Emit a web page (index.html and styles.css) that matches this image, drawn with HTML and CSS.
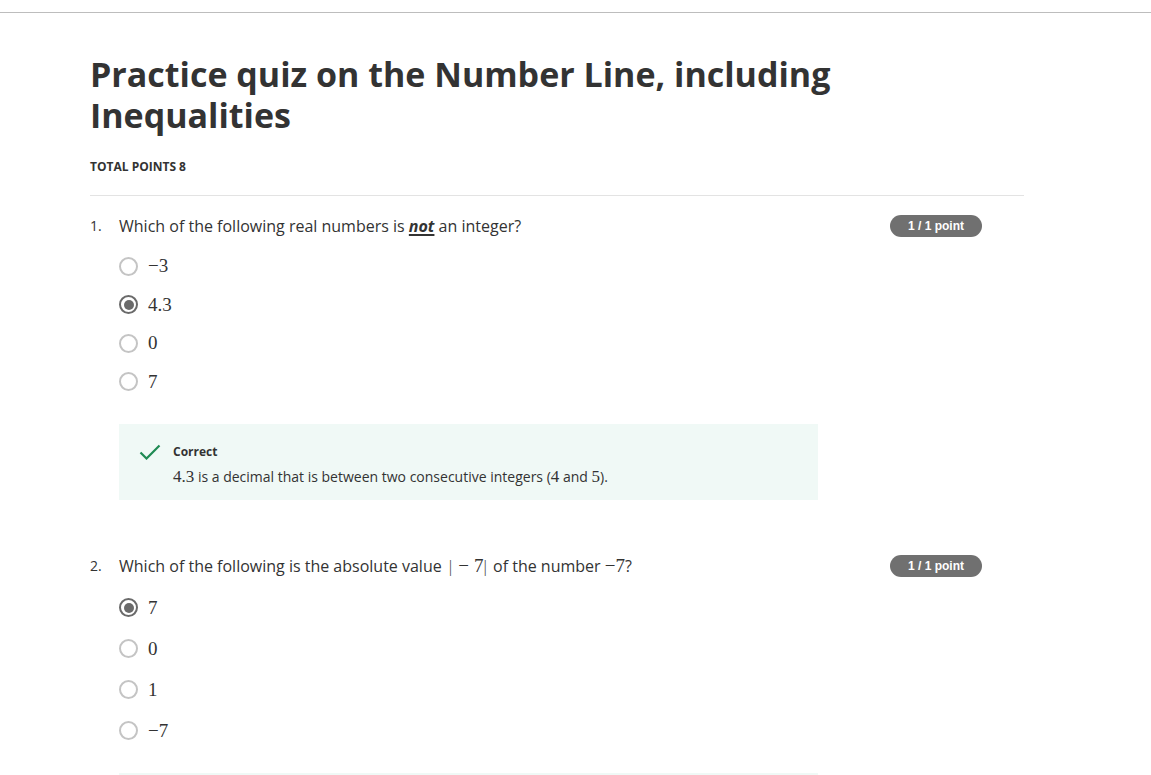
FILE: index.html
```html
<!DOCTYPE html>
<html>
<head>
<meta charset="utf-8">
<link rel="stylesheet" href="styles.css">
</head>
<body>
<div class="topbar"></div>
<main class="page">
  <h1 class="title">Practice quiz on the Number Line, including Inequalities</h1>
  <div class="total">TOTAL POINTS 8</div>
  <div class="sep"></div>

  <section class="question">
    <div class="qnum">1.</div>
    <div class="qbody">
      <div class="qtext">Which of the following real numbers is <u><b><i>not</i></b></u> an integer?</div>
      <div class="options q1">
        <div class="opt"><span class="radio"></span><span class="math">−3</span></div>
        <div class="opt"><span class="radio checked"></span><span class="math">4.3</span></div>
        <div class="opt"><span class="radio"></span><span class="math">0</span></div>
        <div class="opt"><span class="radio"></span><span class="math">7</span></div>
      </div>
      <div class="feedback">
        <svg class="check" width="22" height="16" viewBox="0 0 22 16"><path d="M1.5 8.5 L7.5 14.5 L20.5 1.5" fill="none" stroke="#1f8a53" stroke-width="2.2"/></svg>
        <div class="fb-text">
          <div class="fb-title">Correct</div>
          <div class="fb-expl"><span class="math">4.3</span> is a decimal that is between two consecutive integers (<span class="math">4</span> and <span class="math">5</span>).</div>
        </div>
      </div>
    </div>
    <div class="badge">1 / 1 point</div>
  </section>

  <section class="question q2">
    <div class="qnum">2.</div>
    <div class="qbody">
      <div class="qtext">Which of the following is the absolute value <span class="math abs"><span class="bar">|</span><span class="bin">−</span>7<span class="bar">|</span></span> of the number <span class="math">−7</span>?</div>
      <div class="options q2opts">
        <div class="opt"><span class="radio checked"></span><span class="math">7</span></div>
        <div class="opt"><span class="radio"></span><span class="math">0</span></div>
        <div class="opt"><span class="radio"></span><span class="math">1</span></div>
        <div class="opt"><span class="radio"></span><span class="math">−7</span></div>
      </div>
      <div class="feedback partial"></div>
    </div>
    <div class="badge">1 / 1 point</div>
  </section>
</main>
</body>
</html>
```

FILE: styles.css
```css
html, body {
  margin: 0;
  padding: 0;
  background: #fff;
  overflow: hidden;
  height: 775px;
}
body {
  font-family: "Open Sans", "Liberation Sans", sans-serif;
  color: #333;
}
.topbar {
  height: 12px;
  border-bottom: 1px solid #bdbdbd;
}
.page {
  width: 934px;
  margin-left: 90px;
}
.title {
  margin: 0;
  padding-top: 41px;
  font-size: 34px;
  line-height: 41px;
  font-weight: 700;
  color: #333;
  width: 760px;
}
.total {
  margin-top: 23px;
  font-size: 12px;
  font-weight: 700;
  line-height: 16px;
  color: #333;
}
.sep {
  margin-top: 20px;
  height: 1px;
  background: #e3e3e3;
}
.question {
  display: grid;
  grid-template-columns: 29px 771px 92px;
  margin-top: 19px;
}
.question.q2 {
  margin-top: 55px;
}
.qnum {
  font-size: 14px;
  line-height: 22px;
}
.qtext {
  font-size: 16px;
  line-height: 22px;
}
.qtext u {
  text-underline-offset: 2px;
  text-decoration-thickness: 2px;
}
.qtext .math {
  font-size: 19px;
  line-height: 16px;
}
.abs {
  margin: 0 2px 0 3px;
}
.abs .bin {
  margin: 0 5px 0 6px;
}
.abs .bar {
  font-size: 17px;
  color: #555;
}
.math {
  font-family: "Liberation Serif", serif;
}
.options {
  margin-top: 10px;
  display: flex;
  flex-direction: column;
}
.opt {
  display: flex;
  align-items: center;
  height: 38.5px;
  font-size: 19px;
}
.q2opts .opt {
  height: 41px;
}
.radio {
  box-sizing: border-box;
  width: 19px;
  height: 19px;
  border: 2px solid #c4c4c4;
  border-radius: 50%;
  margin-right: 10px;
  position: relative;
}
.radio.checked {
  border-color: #6a6a6a;
}
.radio.checked::after {
  content: "";
  position: absolute;
  left: 2.5px;
  top: 2.5px;
  width: 10px;
  height: 10px;
  border-radius: 50%;
  background: #6a6a6a;
}
.feedback {
  margin-top: 23px;
  width: 699px;
  height: 76px;
  box-sizing: border-box;
  background: #f0f9f6;
  display: flex;
  align-items: flex-start;
  padding: 19px 0 0 20px;
}
.feedback.partial {
  margin-top: 22px;
  height: 10px;
  padding: 0;
}
.check {
  margin-top: 1px;
  margin-right: 12px;
}
.fb-title {
  font-size: 12px;
  font-weight: 700;
  line-height: 17px;
}
.fb-expl {
  margin-top: 7px;
  font-size: 14px;
  line-height: 19px;
}
.fb-expl .math {
  font-family: "Liberation Serif", serif;
  font-size: 17px;
}
.badge {
  height: 22px;
  border-radius: 11px;
  background: #707070;
  color: #fff;
  font-family: "Liberation Sans", Arial, sans-serif;
  font-weight: 700;
  font-size: 12px;
  line-height: 22px;
  text-align: center;
  margin-top: 0;
}
```
